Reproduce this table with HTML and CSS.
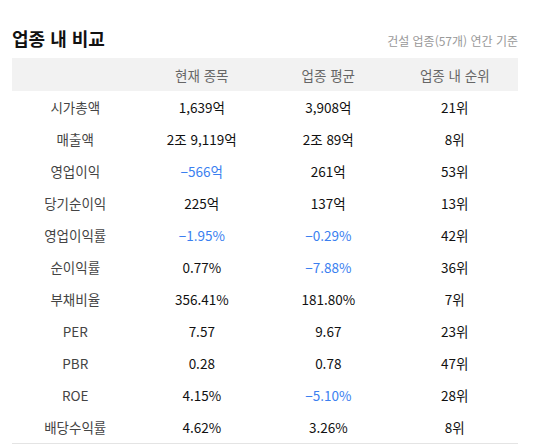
FILE: index.html
```html
<!DOCTYPE html>
<html lang="ko">
<head>
<meta charset="utf-8">
<link rel="stylesheet" href="styles.css">
</head>
<body>
<section class="panel">
  <div class="head">
    <h2 class="title">업종 내 비교</h2>
    <span class="sub">건설 업종(57개) 연간 기준</span>
  </div>
  <table class="cmp">
    <thead>
      <tr><th></th><th>현재 종목</th><th>업종 평균</th><th>업종 내 순위</th></tr>
    </thead>
    <tbody>
      <tr><td class="lbl">시가총액</td><td>1,639억</td><td>3,908억</td><td>21위</td></tr>
      <tr><td class="lbl">매출액</td><td>2조 9,119억</td><td>2조 89억</td><td>8위</td></tr>
      <tr><td class="lbl">영업이익</td><td class="neg">−566억</td><td>261억</td><td>53위</td></tr>
      <tr><td class="lbl">당기순이익</td><td>225억</td><td>137억</td><td>13위</td></tr>
      <tr><td class="lbl">영업이익률</td><td class="neg">−1.95%</td><td class="neg">−0.29%</td><td>42위</td></tr>
      <tr><td class="lbl">순이익률</td><td>0.77%</td><td class="neg">−7.88%</td><td>36위</td></tr>
      <tr><td class="lbl">부채비율</td><td>356.41%</td><td>181.80%</td><td>7위</td></tr>
      <tr><td class="lbl">PER</td><td>7.57</td><td>9.67</td><td>23위</td></tr>
      <tr><td class="lbl">PBR</td><td>0.28</td><td>0.78</td><td>47위</td></tr>
      <tr><td class="lbl">ROE</td><td>4.15%</td><td class="neg">−5.10%</td><td>28위</td></tr>
      <tr><td class="lbl">배당수익률</td><td>4.62%</td><td>3.26%</td><td>8위</td></tr>
    </tbody>
  </table>
</section>
</body>
</html>
```

FILE: styles.css
```css
html, body {
  margin: 0;
  padding: 0;
  background: #fff;
}
body {
  font-family: "Noto Sans CJK KR", "Noto Sans", sans-serif;
  color: #111;
}
.panel {
  padding: 26px 19px 0 12px;
}
.head {
  display: flex;
  justify-content: space-between;
  align-items: baseline;
  height: 32px;
}
.title {
  margin: 0;
  font-size: 18px;
  font-weight: 700;
  line-height: 24px;
  color: #111;
}
.sub {
  font-size: 12px;
  color: #999;
}
.cmp {
  width: 100%;
  border-collapse: collapse;
  table-layout: fixed;
  border-bottom: 1px solid #e4e4e4;
}
.cmp th {
  background: #f2f2f2;
  height: 33px;
  padding: 0;
  font-size: 13.5px;
  font-weight: 400;
  color: #666;
  text-align: center;
}
.cmp td {
  height: 32px;
  padding: 0;
  font-size: 13.5px;
  text-align: center;
  color: #111;
}
.cmp td.lbl {
  color: #444;
}
.cmp td.neg {
  color: #3b7ff0;
}
```
